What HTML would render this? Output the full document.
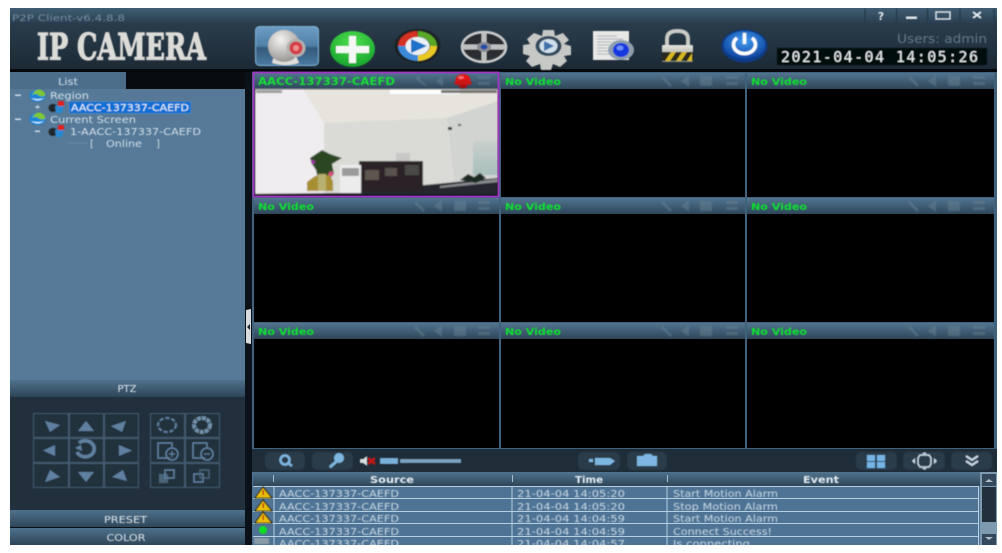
<!DOCTYPE html>
<html><head><meta charset="utf-8"><title>IP Camera</title>
<style>
html,body{margin:0;padding:0;background:#fff;width:1002px;height:553px;overflow:hidden}
svg{display:block}
text{font-family:"DejaVu Sans","Liberation Sans",sans-serif}
.t{font-size:10px;fill:#d3e0ea}
.r{font-size:10px;fill:#c9d9e6}
.g{font-size:10px;fill:#10e030;font-weight:bold}
.h{font-size:10px;fill:#e4edf3;font-weight:bold;text-anchor:middle}
.b{font-size:10px;fill:#dfe8ee;text-anchor:middle}
.p{fill:#22303d;stroke:#425a6d;stroke-width:1}
.i{fill:#5f80a0}
.o{fill:none;stroke:#5f80a0;stroke-width:1.5}
.tb{fill:#2a3b4a}
.ti{fill:#6f8899;opacity:.42}
</style></head><body>
<svg width="1002" height="553" viewBox="0 0 1002 553" xmlns="http://www.w3.org/2000/svg">
<defs>
<linearGradient id="tt" x1="0" y1="0" x2="0" y2="1"><stop offset="0" stop-color="#3f5d74"/><stop offset="1" stop-color="#2a3f50"/></linearGradient>
<linearGradient id="hd" x1="0" y1="0" x2="0" y2="1"><stop offset="0" stop-color="#2a3c4b"/><stop offset="1" stop-color="#1c2a36"/></linearGradient>
<linearGradient id="ct" x1="0" y1="0" x2="0" y2="1"><stop offset="0" stop-color="#52748f"/><stop offset="1" stop-color="#2e4659"/></linearGradient>
<linearGradient id="bar" x1="0" y1="0" x2="0" y2="1"><stop offset="0" stop-color="#4f718c"/><stop offset="1" stop-color="#2d4558"/></linearGradient>
<linearGradient id="cam" x1="0" y1="0" x2="0" y2="1"><stop offset="0" stop-color="#6f9dc4"/><stop offset=".5" stop-color="#4f80a8"/><stop offset=".55" stop-color="#33597a"/><stop offset="1" stop-color="#4b7ba3"/></linearGradient>
<radialGradient id="sil" cx=".4" cy=".3" r=".8"><stop offset="0" stop-color="#f5f3f0"/><stop offset="1" stop-color="#8d8a88"/></radialGradient>
<radialGradient id="grn" cx=".5" cy=".3" r=".8"><stop offset="0" stop-color="#4fe04f"/><stop offset="1" stop-color="#109c28"/></radialGradient>
<radialGradient id="blu" cx=".5" cy=".35" r=".7"><stop offset="0" stop-color="#3f9cf0"/><stop offset="1" stop-color="#0a3c98"/></radialGradient>
<linearGradient id="lk" x1="0" y1="0" x2="0" y2="1"><stop offset="0" stop-color="#e6e6de"/><stop offset="1" stop-color="#8e9084"/></linearGradient>
<linearGradient id="win" x1="0" y1="0" x2="0" y2="1"><stop offset="0" stop-color="#c8cfcc"/><stop offset="1" stop-color="#a8bebc"/></linearGradient>
<filter id="s" x="-5%" y="-5%" width="110%" height="110%"><feGaussianBlur stdDeviation="0.45"/></filter>
<filter id="s2" x="-5%" y="-5%" width="110%" height="110%"><feGaussianBlur stdDeviation="0.8"/></filter>
</defs>

<rect width="1002" height="553" fill="#fff"/>
<rect x="10" y="8" width="987" height="537" fill="#101820"/>
<!-- title + header -->
<rect x="10" y="8" width="987" height="15" fill="url(#tt)"/>
<rect x="10" y="23" width="987" height="46" fill="url(#hd)"/>
<rect x="10" y="69" width="987" height="3" fill="#06090c"/>

<g filter="url(#s)">
<text x="12" y="21" font-size="9" fill="#75909f" textLength="113" lengthAdjust="spacingAndGlyphs">P2P Client-v6.4.8.8</text>
<path d="M865 9v13M896.500 9v13M927.500 9v13M960 9v13M994 9v13" stroke="#22333f" stroke-width="1"/>
<text x="881" y="20" font-size="11" font-weight="bold" fill="#dfe6ea" text-anchor="middle">?</text>
<rect x="906" y="16.500" width="11" height="2.500" fill="#dfe6ea"/>
<rect x="936" y="12" width="14" height="7" fill="none" stroke="#dfe6ea" stroke-width="1.500"/>
<path d="M973 12l8 6m0-6l-8 6" stroke="#e6ecef" stroke-width="2" fill="none"/>

<text x="37" y="59.500" font-size="36" font-weight="bold" fill="#dbdbd8" stroke="#dbdbd8" stroke-width="1.200" textLength="169" lengthAdjust="spacingAndGlyphs" style="font-family:'DejaVu Serif',serif">IP CAMERA</text>

<!-- webcam button -->
<rect x="255.500" y="26.500" width="63" height="39" rx="4" fill="url(#cam)" stroke="#7fb0d6"/>
<path d="M274 56q10-5 22 0l3 7q-13 4-27 0z" fill="#e0deda"/>
<ellipse cx="284" cy="46" rx="16" ry="16" fill="url(#sil)"/>
<ellipse cx="296" cy="48" rx="9.500" ry="9" fill="#b5b0ae"/>
<circle cx="296" cy="48" r="6.500" fill="#d03c44"/><circle cx="296" cy="48" r="3" fill="#ef8c8c"/>

<!-- plus -->
<ellipse cx="352.500" cy="49" rx="22.500" ry="18" fill="url(#grn)"/>
<path d="M349 36h7v10h13v7h-13v10h-7v-10h-13v-7h13z" fill="#f4f8f4"/>

<!-- play -->
<ellipse cx="417.500" cy="46" rx="23" ry="17" fill="#1b2024"/>
<path d="M398 46a19.500 15 0 0 1 19-15l1 6a12 9 0 0 0-12 9z" fill="#d43020"/>
<path d="M418 31a20 15 0 0 1 19 15h-7a12 9 0 0 0-12-9z" fill="#58a828"/>
<path d="M437 46a20 15 0 0 1-19 15v-6a12 9 0 0 0 12-9z" fill="#e8c820"/>
<path d="M418 61a20 15 0 0 1-20-15h8a12 9 0 0 0 12 9z" fill="#3a8ad8"/>
<ellipse cx="417.500" cy="46" rx="12" ry="9" fill="#eaf0f4"/>
<path d="M411 39l16 7-16 7z" fill="#1c72c8"/>

<!-- reel -->
<ellipse cx="484" cy="47" rx="22" ry="15" fill="#2a2e32" stroke="#c8cacb" stroke-width="2.500"/>
<path d="M484 33v28M463 47h42" stroke="#bdbfc0" stroke-width="5"/>
<ellipse cx="484" cy="47" rx="7" ry="5" fill="#888c90"/><ellipse cx="484" cy="47" rx="3.500" ry="2.500" fill="#2848a8"/>

<!-- gear -->
<path d="M543 30h11l1 6 8-3 6 7-5 4 7 2v9l-7 1 3 5-7 6-7-3-2 6h-10l-1-6-8 3-6-6 4-5-7-2v-9l7-1-3-5 7-6 8 3z" fill="#c6c8c6"/>
<ellipse cx="548.500" cy="46" rx="13" ry="10" fill="#33485c"/>
<ellipse cx="548.500" cy="46" rx="9" ry="7" fill="#cfe0ec"/>
<path d="M544 41l10 5-10 5z" fill="#3f70a8"/>

<!-- doc -->
<rect x="593" y="31" width="36" height="29" fill="#e8e8e6"/>
<path d="M597 36h20M597 39h26M597 42h14M597 45h12M597 48h10M597 51h12M597 54h12" stroke="#a8aeb4" stroke-width="1"/>
<ellipse cx="621" cy="50" rx="13" ry="10" fill="#8f9fae"/>
<ellipse cx="621" cy="50" rx="8" ry="7" fill="#1438e0"/><ellipse cx="620" cy="48" rx="3.500" ry="2.500" fill="#6f8ff8"/>

<!-- lock -->
<path d="M667 46v-7q0-8 10.500-8t10.500 8v7" fill="none" stroke="#c8cac4" stroke-width="4"/>
<rect x="662" y="45" width="31" height="17" rx="1" fill="url(#lk)"/>
<rect x="662" y="52" width="31" height="9" fill="#2a2a1e"/>
<path d="M665 61l6-9h5l-6 9zM676 61l6-9h5l-6 9zM687 61l5-8v8z" fill="#d8b820"/>

<!-- power -->
<ellipse cx="744.500" cy="46" rx="23" ry="16.500" fill="#0c3a88"/>
<ellipse cx="744.500" cy="45" rx="21" ry="14" fill="url(#blu)"/>
<path d="M737 38a11 9 0 1 0 15 0" fill="none" stroke="#fff" stroke-width="3.500"/>
<path d="M744.500 33v11" stroke="#fff" stroke-width="3.500"/>

<text x="987" y="43" font-size="12" fill="#64798a" text-anchor="end" textLength="90" lengthAdjust="spacingAndGlyphs">Users: admin</text>
<rect x="777" y="48" width="210" height="17" fill="#05070a"/>
<text x="781" y="62" font-size="15" fill="#e8eef0" textLength="197" lengthAdjust="spacing" style="font-family:'DejaVu Sans Mono',monospace">2021-04-04 14:05:26</text>
</g>

<!-- left panel -->
<rect x="10" y="72" width="235" height="18" fill="#080c10"/>
<path d="M10 72h116v18H10z" fill="#4c6e8b"/>
<rect x="10" y="89" width="235" height="291" fill="#557997"/>
<rect x="245" y="72" width="8" height="473" fill="#0b1118"/>
<rect x="10" y="380" width="235" height="17" fill="url(#bar)"/>
<rect x="10" y="397" width="235" height="113" fill="#22303d"/>
<rect x="10" y="510" width="235" height="17" fill="url(#bar)"/>
<rect x="10" y="527" width="235" height="1" fill="#0b1118"/>
<rect x="10" y="528" width="235" height="17" fill="url(#bar)"/>
<path d="M246 310l5-1v35l-5-1z" fill="#d6dbde"/><path d="M247 327l3-3v6z" fill="#1a2028"/>

<g filter="url(#s)">
<text x="58" y="85" class="t" textLength="20" lengthAdjust="spacingAndGlyphs">List</text>
<rect x="15" y="94.500" width="6" height="1.500" fill="#d3e0ea"/>
<ellipse cx="37.500" cy="96" rx="8" ry="6" fill="#1f84d8"/><path d="M32 95q4-7 9-5t4 6q-5 1-7-1t-6 0z" fill="#7cc838"/><path d="M31 98q7 5 13 0-6 2-13 0z" fill="#ccecff"/>
<text x="50" y="99" class="t" textLength="39" lengthAdjust="spacingAndGlyphs">Region</text>
<path d="M35 107h5M37.500 105v4" stroke="#d3e0ea" stroke-width="1"/>
<ellipse cx="53" cy="108" rx="4.500" ry="4" fill="#20262c"/><rect x="58" y="101" width="6" height="5" fill="#e02020"/><path d="M55 106h9l-2 7h-6z" fill="#2a88d0"/>
<rect x="69" y="101.500" width="122" height="12" fill="#0b6ed4" stroke="#8ab" stroke-width=".5" stroke-dasharray="1 1"/>
<text x="71" y="111" class="t" style="fill:#e8f2fa" textLength="118" lengthAdjust="spacingAndGlyphs">AACC-137337-CAEFD</text>
<rect x="15" y="118.500" width="6" height="1.500" fill="#d3e0ea"/>
<ellipse cx="37.500" cy="119" rx="8" ry="6" fill="#1f84d8"/><path d="M32 118q4-7 9-5t4 6q-5 1-7-1t-6 0z" fill="#7cc838"/><path d="M31 121q7 5 13 0-6 2-13 0z" fill="#ccecff"/>
<text x="50" y="123" class="t" textLength="86" lengthAdjust="spacingAndGlyphs">Current Screen</text>
<rect x="35" y="130.500" width="5" height="1.500" fill="#d3e0ea"/>
<ellipse cx="53" cy="132" rx="4.500" ry="4" fill="#20262c"/><rect x="58" y="125" width="6" height="5" fill="#e02020"/><path d="M55 130h9l-2 7h-6z" fill="#2a88d0"/>
<text x="70" y="135" class="t" textLength="131" lengthAdjust="spacingAndGlyphs">1-AACC-137337-CAEFD</text>
<path d="M68 143h19" stroke="#7d9cb4" stroke-width="1" stroke-dasharray="1 1"/>
<text x="90" y="147" class="t">[</text><text x="106" y="147" class="t" textLength="36" lengthAdjust="spacingAndGlyphs">Online</text><text x="156" y="147" class="t">]</text>
<text x="127" y="392" class="b" font-size="10">PTZ</text>
<text x="125.500" y="523" class="b" textLength="43" lengthAdjust="spacingAndGlyphs">PRESET</text>
<text x="126" y="541" class="b" textLength="39" lengthAdjust="spacingAndGlyphs">COLOR</text>
</g>

<!-- PTZ grid -->
<g filter="url(#s)">
<rect class="p" x="33.500" y="413.500" width="35" height="24"/><rect class="p" x="69.500" y="413.500" width="34" height="24"/><rect class="p" x="104.500" y="413.500" width="34" height="24"/>
<rect class="p" x="33.500" y="438.500" width="35" height="24"/><rect class="p" x="69.500" y="438.500" width="34" height="24"/><rect class="p" x="104.500" y="438.500" width="34" height="24"/>
<rect class="p" x="33.500" y="463.500" width="35" height="24"/><rect class="p" x="69.500" y="463.500" width="34" height="24"/><rect class="p" x="104.500" y="463.500" width="34" height="24"/>
<rect class="p" x="150.500" y="413.500" width="34" height="24"/><rect class="p" x="185.500" y="413.500" width="34" height="24"/>
<rect class="p" x="150.500" y="438.500" width="34" height="24"/><rect class="p" x="185.500" y="438.500" width="34" height="24"/>
<rect class="p" x="150.500" y="463.500" width="34" height="24"/><rect class="p" x="185.500" y="463.500" width="34" height="24"/>
<path class="i" d="M45 421l15 4-10 7zM86 421l8 10H78zM126 421l-15 5 11 6zM55 445v11l-12-5.500zM119 445v11l13-5.500zM45 482l15-5-10-7zM78 472h16l-8 10zM127 481l-15-4 11-7z"/>
<path d="M79 443a9 8 0 1 1-2 9" fill="none" stroke="#5f80a0" stroke-width="3.500"/><path d="M75 448l6-3 1 6z" fill="#5f80a0"/>
<ellipse cx="167" cy="425" rx="9" ry="7" fill="none" stroke="#5f80a0" stroke-width="2" stroke-dasharray="4 2"/>
<ellipse cx="202" cy="425" rx="8" ry="7" fill="none" stroke="#6f8fa8" stroke-width="4" stroke-dasharray="4 1"/>
<path class="o" d="M170 458h-12v-15h14v4M205 458h-12v-15h14v4"/>
<circle class="o" cx="172" cy="454" r="6"/><path d="M169 454h6M172 451v6" stroke="#5f80a0" stroke-width="1.200"/>
<circle class="o" cx="207" cy="454" r="6"/><path d="M204 454h6" stroke="#5f80a0" stroke-width="1.200"/>
<rect x="159" y="474" width="9" height="9" fill="#4a6478"/><rect x="165" y="470" width="9" height="8" fill="none" stroke="#5f80a0" stroke-width="1.500"/>
<rect x="194" y="474" width="9" height="8" fill="none" stroke="#5f80a0" stroke-width="1.500"/><rect x="200" y="470" width="9" height="8" fill="none" stroke="#4a6478" stroke-width="1.500"/>
</g>

<!-- Grid -->
<rect x="252" y="72" width="745" height="377" fill="#41627c"/>
<g>
<rect x="254" y="73" width="245" height="124" fill="#000"/><rect x="501" y="73" width="244" height="124" fill="#000"/><rect x="747" y="73" width="247" height="124" fill="#000"/>
<rect x="254" y="198" width="245" height="124" fill="#000"/><rect x="501" y="198" width="244" height="124" fill="#000"/><rect x="747" y="198" width="247" height="124" fill="#000"/>
<rect x="254" y="323" width="245" height="125" fill="#000"/><rect x="501" y="323" width="244" height="125" fill="#000"/><rect x="747" y="323" width="247" height="125" fill="#000"/>
<rect x="254" y="73" width="245" height="16" fill="url(#ct)"/><rect x="501" y="73" width="244" height="16" fill="url(#ct)"/><rect x="747" y="73" width="247" height="16" fill="url(#ct)"/>
<rect x="254" y="198" width="245" height="16" fill="url(#ct)"/><rect x="501" y="198" width="244" height="16" fill="url(#ct)"/><rect x="747" y="198" width="247" height="16" fill="url(#ct)"/>
<rect x="254" y="323" width="245" height="16" fill="url(#ct)"/><rect x="501" y="323" width="244" height="16" fill="url(#ct)"/><rect x="747" y="323" width="247" height="16" fill="url(#ct)"/>
</g>

<!-- photo -->
<g filter="url(#s2)">
<rect x="255" y="89" width="243" height="106" fill="#dcdcd8"/>
<path d="M303 89H498V101L447 118 324 123z" fill="#e6e4dc"/>
<path d="M255 89h48l21 34v70H255z" fill="#f0edf0"/>
<path d="M324 123l123-5 8 67H324z" fill="#dadbd6"/>
<path d="M447 118l51-17v80l-43 6z" fill="#d2d4d2"/>
<rect x="473" y="141" width="25" height="34" fill="url(#win)"/>
<rect x="390" y="89" width="70" height="5" fill="#fff"/>
<rect x="256" y="90" width="26" height="3" fill="#9a9a98"/><rect x="441" y="90" width="56" height="3" fill="#6a6a68"/>
<path d="M340 193L498 178V195H255v-1z" fill="#26262e"/>
<path d="M440 186l58-7v3l-58 6z" fill="#8a8e90"/>
<rect x="359" y="161" width="64" height="30" fill="#2c2426"/>
<rect x="365" y="170" width="14" height="10" fill="#5c5650"/><rect x="385" y="168" width="12" height="8" fill="#58524e"/><rect x="405" y="165" width="14" height="10" fill="#4c4844"/>
<rect x="340" y="165" width="21" height="28" fill="#ececec"/><path d="M342 168h17v8h-17z" fill="#9a9a9a"/>
<rect x="396" y="153" width="14" height="8" fill="#c8c8c6"/>
<path d="M310 158l12-8 8 4 12 4-10 6 2 10-6 6-10 0-2-10-4-6z" fill="#2a4622"/>
<circle cx="313" cy="162" r="2" fill="#a030a0"/><circle cx="331" cy="174" r="2.500" fill="#d85080"/>
<path d="M307 182l8-6 14-1 4 6v10h-26z" fill="#a88e30"/><rect x="318" y="174" width="8" height="17" fill="#b8b070"/>
<path d="M460 180l8-6 6 3 6-4 6 5-10 5z" fill="#1c2c24"/>
<rect x="448" y="127" width="4" height="3" fill="#333"/><rect x="458" y="124" width="3" height="2" fill="#444"/>
</g>
<rect x="253.500" y="72.500" width="245" height="124" fill="none" stroke="#a236c4" stroke-width="1.800"/>

<!-- title overlay -->
<g filter="url(#s)">
<text x="258" y="85" font-size="11" font-weight="bold" fill="#12e030" textLength="137" lengthAdjust="spacingAndGlyphs">AACC-137337-CAEFD</text>
<text x="505" y="85" class="g" textLength="56" lengthAdjust="spacingAndGlyphs">No Video</text>
<text x="751" y="85" class="g" textLength="56" lengthAdjust="spacingAndGlyphs">No Video</text>
<text x="258" y="210" class="g" textLength="56" lengthAdjust="spacingAndGlyphs">No Video</text>
<text x="505" y="210" class="g" textLength="56" lengthAdjust="spacingAndGlyphs">No Video</text>
<text x="751" y="210" class="g" textLength="56" lengthAdjust="spacingAndGlyphs">No Video</text>
<text x="258" y="335" class="g" textLength="56" lengthAdjust="spacingAndGlyphs">No Video</text>
<text x="505" y="335" class="g" textLength="56" lengthAdjust="spacingAndGlyphs">No Video</text>
<text x="751" y="335" class="g" textLength="56" lengthAdjust="spacingAndGlyphs">No Video</text>
</g>
<g filter="url(#s2)">
<circle cx="418" cy="78" r="2" class="ti"/><path class="ti" d="M419 79l8 6-2 1-8-6z"/><path class="ti" d="M436 81l7-5v11z"/><rect class="ti" x="478" y="76" width="12" height="3"/><rect class="ti" x="478" y="82" width="12" height="3"/>
<g class="ti"><path d="M663 76l9 9-2 2-9-9zM681 81l8-6v12z"/><rect x="700" y="76" width="12" height="10"/><rect x="726" y="76" width="12" height="3"/><rect x="726" y="82" width="12" height="3"/></g>
<g class="ti"><path d="M910 76l9 9-2 2-9-9zM928 81l8-6v12z"/><rect x="948" y="76" width="12" height="10"/><rect x="973" y="76" width="12" height="3"/><rect x="973" y="82" width="12" height="3"/></g>
<g class="ti"><path d="M416 201l9 9-2 2-9-9zM434 206l8-6v12z"/><rect x="454" y="201" width="12" height="10"/><rect x="478" y="201" width="12" height="3"/><rect x="478" y="207" width="12" height="3"/></g>
<g class="ti"><path d="M663 201l9 9-2 2-9-9zM681 206l8-6v12z"/><rect x="700" y="201" width="12" height="10"/><rect x="726" y="201" width="12" height="3"/><rect x="726" y="207" width="12" height="3"/></g>
<g class="ti"><path d="M910 201l9 9-2 2-9-9zM928 206l8-6v12z"/><rect x="948" y="201" width="12" height="10"/><rect x="973" y="201" width="12" height="3"/><rect x="973" y="207" width="12" height="3"/></g>
<g class="ti"><path d="M416 326l9 9-2 2-9-9zM434 331l8-6v12z"/><rect x="454" y="326" width="12" height="10"/><rect x="478" y="326" width="12" height="3"/><rect x="478" y="332" width="12" height="3"/></g>
<g class="ti"><path d="M663 326l9 9-2 2-9-9zM681 331l8-6v12z"/><rect x="700" y="326" width="12" height="10"/><rect x="726" y="326" width="12" height="3"/><rect x="726" y="332" width="12" height="3"/></g>
<g class="ti"><path d="M910 326l9 9-2 2-9-9zM928 331l8-6v12z"/><rect x="948" y="326" width="12" height="10"/><rect x="973" y="326" width="12" height="3"/><rect x="973" y="332" width="12" height="3"/></g>
</g>
<!-- alarm bell -->
<g filter="url(#s)">
<ellipse cx="463" cy="80" rx="7.500" ry="6" fill="#e01818"/><ellipse cx="463" cy="83" rx="9" ry="2.500" fill="#c81414"/><ellipse cx="463" cy="86.500" rx="4" ry="1.800" fill="#a01010"/><ellipse cx="461" cy="77.500" rx="3" ry="1.500" fill="#f47070"/>
</g>

<!-- toolbar -->
<rect x="252" y="449" width="745" height="23" fill="#1f2d39"/>
<g filter="url(#s)">
<rect class="tb" x="265" y="452" width="40" height="18" rx="5"/><rect class="tb" x="312" y="452" width="41" height="18" rx="5"/>
<rect class="tb" x="578" y="452" width="42" height="18" rx="5"/><rect class="tb" x="627" y="452" width="40" height="18" rx="5"/>
<rect class="tb" x="856" y="452" width="41" height="18" rx="5"/><rect class="tb" x="903" y="452" width="42" height="18" rx="5"/><rect class="tb" x="951" y="452" width="41" height="18" rx="5"/>
<circle cx="285" cy="460" r="4.500" fill="none" stroke="#7db6e0" stroke-width="2.500"/><path d="M288 463l4 3" stroke="#7db6e0" stroke-width="2.500"/>
<circle cx="339" cy="458" r="5" fill="#7db6e0"/><path d="M336 460l-7 6 1.500 2.500 7-6z" fill="#7db6e0"/>
<path d="M360 459h3l4-3v10l-4-3h-3z" fill="#d8dde0"/><path d="M368 458l7 6m0-6l-7 6" stroke="#c81818" stroke-width="2.500"/>
<rect x="380" y="458" width="18" height="6" fill="#78b0d8"/><rect x="400" y="459" width="61" height="4" fill="#7aa2c0"/>
<path d="M589 459h4v3h-4zM595 458h15l5 3-5 4h-15z" fill="#7db6e0"/>
<path d="M637 456h6l2-2h6l2 2h4v10h-20z" fill="#7db6e0"/>
<rect x="867" y="455" width="8" height="6" fill="#74b4e4"/><rect x="877" y="455" width="8" height="6" fill="#74b4e4"/><rect x="867" y="462" width="8" height="6" fill="#74b4e4"/><rect x="877" y="462" width="8" height="6" fill="#74b4e4"/>
<path d="M920 455h9l2 3v6l-2 3h-9l-2-3v-6z" fill="none" stroke="#c8d8e4" stroke-width="1.500"/><path d="M915 458v6l-3-3zM934 458v6l3-3zM922 454h5l-2.500-2zM922 468h5l-2.500 2z" fill="#c8d8e4"/>
<path d="M966 456l6 4 6-4M966 461l6 4 6-4" fill="none" stroke="#c8d8e4" stroke-width="2"/>
</g>

<!-- table -->
<rect x="252" y="472" width="745" height="73" fill="#4f7394"/>
<rect x="253" y="472.500" width="727" height="13.500" fill="url(#bar)"/>
<g stroke="#b6d0e2" stroke-width="1">
<path d="M253 486.500H979M253 498.500H979M253 511.500H979M253 523.500H979M253 536.500H979"/>
<path d="M274 486V545M512 486V545M667 486V545M978.500 486V545"/>
</g>
<path d="M273.500 475v7M512.500 475v7M667.500 475v7" stroke="#a8bccb" stroke-width="1"/>
<g filter="url(#s)">
<text x="392" y="483" class="h" textLength="44" lengthAdjust="spacingAndGlyphs">Source</text>
<text x="589" y="483" class="h" textLength="28" lengthAdjust="spacingAndGlyphs">Time</text>
<text x="821" y="483" class="h" textLength="36" lengthAdjust="spacingAndGlyphs">Event</text>
<text x="279" y="497" class="r" textLength="120" lengthAdjust="spacingAndGlyphs">AACC-137337-CAEFD</text>
<text x="279" y="510" class="r" textLength="120" lengthAdjust="spacingAndGlyphs">AACC-137337-CAEFD</text>
<text x="279" y="522" class="r" textLength="120" lengthAdjust="spacingAndGlyphs">AACC-137337-CAEFD</text>
<text x="279" y="535" class="r" textLength="120" lengthAdjust="spacingAndGlyphs">AACC-137337-CAEFD</text>
<text x="279" y="547" class="r" textLength="120" lengthAdjust="spacingAndGlyphs">AACC-137337-CAEFD</text>
<text x="517" y="497" class="r" textLength="108" lengthAdjust="spacingAndGlyphs">21-04-04 14:05:20</text>
<text x="517" y="510" class="r" textLength="108" lengthAdjust="spacingAndGlyphs">21-04-04 14:05:20</text>
<text x="517" y="522" class="r" textLength="108" lengthAdjust="spacingAndGlyphs">21-04-04 14:04:59</text>
<text x="517" y="535" class="r" textLength="108" lengthAdjust="spacingAndGlyphs">21-04-04 14:04:59</text>
<text x="517" y="547" class="r" textLength="108" lengthAdjust="spacingAndGlyphs">21-04-04 14:04:57</text>
<text x="673" y="497" class="r" textLength="105" lengthAdjust="spacingAndGlyphs">Start Motion Alarm</text>
<text x="673" y="510" class="r" textLength="105" lengthAdjust="spacingAndGlyphs">Stop Motion Alarm</text>
<text x="673" y="522" class="r" textLength="105" lengthAdjust="spacingAndGlyphs">Start Motion Alarm</text>
<text x="673" y="535" class="r" textLength="99" lengthAdjust="spacingAndGlyphs">Connect Success!</text>
<text x="673" y="547" class="r" textLength="77" lengthAdjust="spacingAndGlyphs">Is connecting</text>
<path d="M263 487l9 11h-17z" fill="#e8c010" stroke="#201808"/><rect x="262.500" y="490" width="1.500" height="5" fill="#c02010"/>
<path d="M263 500l9 11h-17z" fill="#e8c010" stroke="#201808"/><rect x="262.500" y="503" width="1.500" height="5" fill="#c02010"/>
<path d="M263 512l9 11h-17z" fill="#e8c010" stroke="#201808"/><rect x="262.500" y="515" width="1.500" height="5" fill="#c02010"/>
<circle cx="263" cy="530" r="4" fill="#10e020"/>
<rect x="254" y="538" width="15" height="6" fill="#8a9ca8"/>
</g>
<rect x="0" y="545" width="1002" height="8" fill="#fff"/>

<!-- scrollbar -->
<rect x="980" y="472" width="17" height="73" fill="#7d9ab0"/>
<rect x="982" y="474" width="14" height="12" fill="#33495b"/><path d="M985 482l4-3 4 3z" fill="#aebcc8"/>
<rect x="982" y="487" width="14" height="35" fill="#22303d"/>
<rect x="982" y="534" width="14" height="11" fill="#33495b"/><path d="M985 537l4 3 4-3z" fill="#aebcc8"/>
</svg>
</body></html>
